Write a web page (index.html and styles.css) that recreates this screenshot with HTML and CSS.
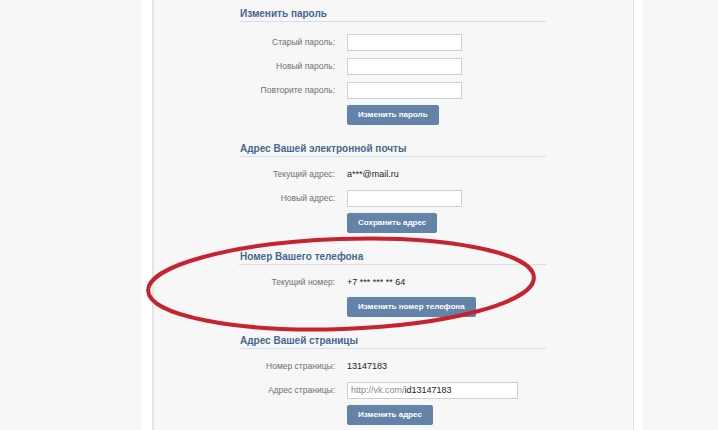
FILE: index.html
```html
<!DOCTYPE html>
<html lang="ru">
<head>
<meta charset="utf-8">
<title>Настройки</title>
<link rel="stylesheet" href="styles.css">
</head>
<body>
<div class="page">
  <div class="panel">
    <section class="section section-first">
      <h2 class="section-title">Изменить пароль</h2>
      <div class="rows">
        <div class="row"><span class="label">Старый пароль:</span><span class="input"></span></div>
        <div class="row"><span class="label">Новый пароль:</span><span class="input"></span></div>
        <div class="row"><span class="label">Повторите пароль:</span><span class="input"></span></div>
      </div>
      <button class="btn">Изменить пароль</button>
    </section>

    <section class="section">
      <h2 class="section-title">Адрес Вашей электронной почты</h2>
      <div class="rows">
        <div class="row"><span class="label">Текущий адрес:</span><span class="value">a***@mail.ru</span></div>
        <div class="row"><span class="label">Новый адрес:</span><span class="input"></span></div>
      </div>
      <button class="btn">Сохранить адрес</button>
    </section>

    <section class="section">
      <h2 class="section-title">Номер Вашего телефона</h2>
      <div class="rows">
        <div class="row"><span class="label">Текущий номер:</span><span class="value">+7 *** *** ** 64</span></div>
      </div>
      <button class="btn">Изменить номер телефона</button>
    </section>

    <section class="section">
      <h2 class="section-title">Адрес Вашей страницы</h2>
      <div class="rows">
        <div class="row"><span class="label">Номер страницы:</span><span class="value">13147183</span></div>
        <div class="row"><span class="label">Адрес страницы:</span><span class="input input-wide"><span class="prefix">http://vk.com/</span>id13147183</span></div>
      </div>
      <button class="btn">Изменить адрес</button>
    </section>
  </div>
</div>
<svg class="mark" width="718" height="430" viewBox="0 0 718 430" aria-hidden="true">
  <ellipse cx="341" cy="284" rx="193" ry="45" transform="rotate(-2 341 284)" fill="none" stroke="#c6232f" stroke-width="4"/>
</svg>
</body>
</html>
```

FILE: styles.css
```css
html, body {
  margin: 0;
  padding: 0;
}

body {
  background: #f7f7f7;
  font-family: "Liberation Sans", Arial, sans-serif;
  font-size: 8.5px;
  color: #222;
  width: 718px;
  height: 430px;
  overflow: hidden;
  position: relative;
}

.page {
  margin-left: 142px;
  width: 500px;
  height: 430px;
  box-sizing: border-box;
  background: #fff;
  padding: 0 8px 0 10px;
}

.panel {
  height: 100%;
  box-sizing: border-box;
  background: #f7f7f7;
  border-left: 2px solid #e4e4e4;
  border-right: 1px solid #e4e4e4;
  padding: 8px 0 0 85px;
}

.section {
  width: 307px;
  padding-bottom: 18px;
}

.section-title {
  margin: 0;
  padding: 0 0 1px 1px;
  font-size: 10px;
  line-height: 12px;
  font-weight: bold;
  color: #45688e;
  border-bottom: 1px solid #d6dde5;
}

.rows {
  padding-top: 5px;
}

.section-first .rows {
  padding-top: 8px;
}

.row {
  display: flex;
  align-items: center;
  height: 24px;
}

.label {
  width: 96px;
  margin-right: 12px;
  text-align: right;
  color: #707070;
  white-space: nowrap;
}

.value {
  color: #222;
  font-size: 9px;
}

.input {
  display: block;
  width: 115px;
  height: 17px;
  box-sizing: border-box;
  background: #fff;
  border: 1px solid #cbd1d8;
  padding: 0 3px;
  line-height: 15px;
  font-size: 9px;
  color: #222;
  white-space: nowrap;
}

.input-wide {
  width: 171px;
}

.prefix {
  color: #888;
}

.btn {
  display: block;
  margin: 3px 0 0 108px;
  height: 20px;
  padding: 0 11px;
  border: 0;
  border-radius: 2px;
  background: #6383a9;
  color: #fff;
  font-family: "Liberation Sans", Arial, sans-serif;
  font-size: 8px;
  font-weight: bold;
  line-height: 20px;
  white-space: nowrap;
}

.mark {
  position: absolute;
  left: 0;
  top: 0;
  pointer-events: none;
}
```
